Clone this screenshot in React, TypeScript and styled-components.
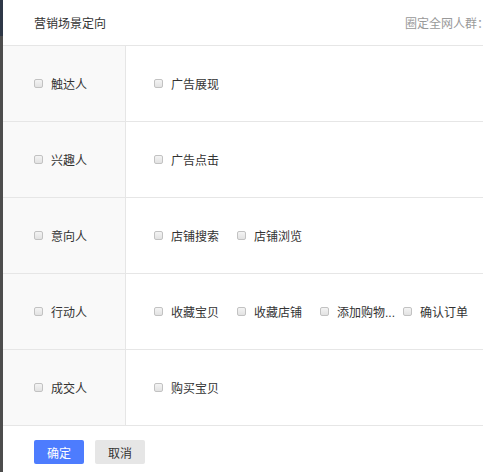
import React from 'react';
import styled, { createGlobalStyle } from 'styled-components';

const GlobalStyle = createGlobalStyle`
  html, body { margin: 0; padding: 0; background: #fff; }
  body { font-family: "Liberation Sans", "Noto Sans CJK SC", sans-serif; }
  * { box-sizing: border-box; }
`;

const Screen = styled.div`
  display: flex;
  width: 483px;
  height: 472px;
  overflow: hidden;
`;

const SideStrip = styled.div`
  width: 3px;
  flex: none;
  background: linear-gradient(#2f3847 0, #2f3847 36px, #4d4d4d 36px);
`;

const Panel = styled.div`
  flex: 1;
  display: flex;
  flex-direction: column;
  min-width: 0;
  font-size: 12px;
  color: #333;
`;

const Header = styled.div`
  height: 46px;
  display: flex;
  align-items: center;
  justify-content: space-between;
  padding: 0 0 0 31px;
  border-bottom: 1px solid #e6e6e6;
  white-space: nowrap;
`;

const Title = styled.span`
  color: #333;
`;

const Hint = styled.span`
  color: #999;
  margin-right: -6px;
`;

const Row = styled.div`
  display: flex;
  height: 76px;
  border-bottom: 1px solid #e6e6e6;
`;

const LeftCell = styled.div`
  width: 123px;
  flex: none;
  display: flex;
  align-items: center;
  padding-left: 31px;
  background: #f9f9f9;
  border-right: 1px solid #e6e6e6;
`;

const RightCell = styled.div`
  flex: 1;
  display: flex;
  align-items: center;
  padding-left: 28px;
`;

const Option = styled.label<{ $w?: number }>`
  display: flex;
  align-items: center;
  width: ${(p) => (p.$w ? `${p.$w}px` : 'auto')};
  white-space: nowrap;
`;

const Box = styled.span`
  width: 9px;
  height: 9px;
  flex: none;
  border: 1px solid #c2c2c2;
  border-radius: 2px;
  background: linear-gradient(#f4f4f4, #e2e2e2);
  margin-right: 8px;
`;

const Label = styled.span`
  display: inline-block;
`;

const Footer = styled.div`
  display: flex;
  align-items: center;
  gap: 11px;
  padding: 14px 0 0 31px;
`;

const Button = styled.button<{ $primary?: boolean }>`
  width: 50px;
  height: 24px;
  border: none;
  border-radius: 2px;
  font-size: 12px;
  font-family: inherit;
  padding: 0;
  color: ${(p) => (p.$primary ? '#fff' : '#333')};
  background: ${(p) => (p.$primary ? '#4d7cfe' : '#e6e6e6')};
`;

const rows: { name: string; opts: string[] }[] = [
  { name: '触达人', opts: ['广告展现'] },
  { name: '兴趣人', opts: ['广告点击'] },
  { name: '意向人', opts: ['店铺搜索', '店铺浏览'] },
  { name: '行动人', opts: ['收藏宝贝', '收藏店铺', '添加购物...', '确认订单'] },
  { name: '成交人', opts: ['购买宝贝'] },
];

export default function App() {
  return (
    <>
      <GlobalStyle />
      <Screen>
        <SideStrip />
        <Panel>
          <Header>
            <Title>营销场景定向</Title>
            <Hint>圈定全网人群：</Hint>
          </Header>
          {rows.map((r) => (
            <Row key={r.name}>
              <LeftCell>
                <Option>
                  <Box />
                  <Label>{r.name}</Label>
                </Option>
              </LeftCell>
              <RightCell>
                {r.opts.map((o) => (
                  <Option key={o} $w={83}>
                    <Box />
                    <Label>{o}</Label>
                  </Option>
                ))}
              </RightCell>
            </Row>
          ))}
          <Footer>
            <Button $primary>确定</Button>
            <Button>取消</Button>
          </Footer>
        </Panel>
      </Screen>
    </>
  );
}
